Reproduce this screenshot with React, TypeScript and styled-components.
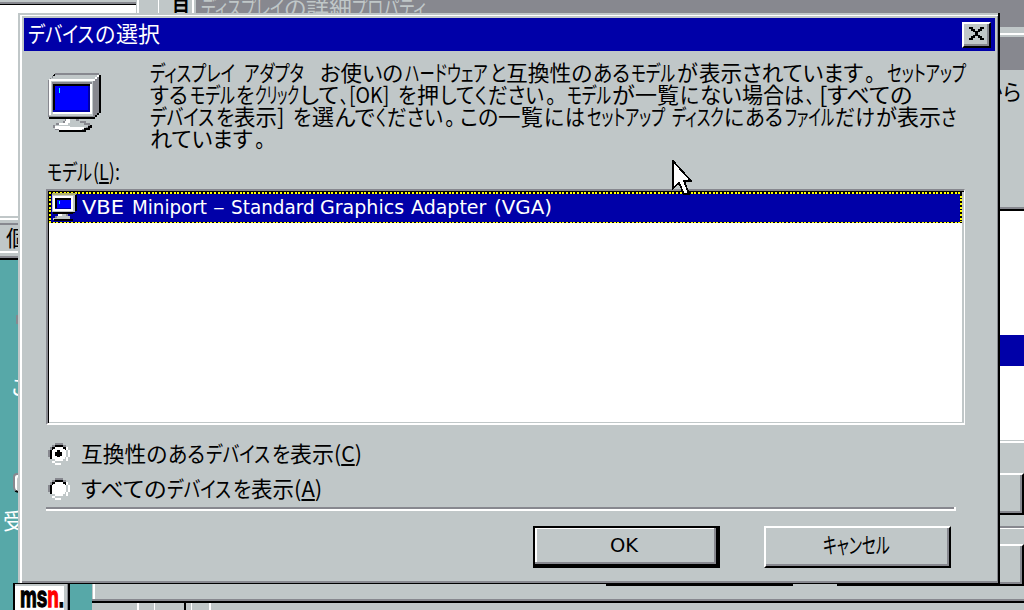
import React, { useLayoutEffect, useRef, useState } from "react";
import styled, { createGlobalStyle } from "styled-components";

const face = "#c0c7c8";
const shade = "#87888f";
const navy = "#0000a8";
const teal = "#57a8a8";

const GlobalStyle = createGlobalStyle`
  * { box-sizing: border-box; }
  body { margin: 0; overflow: hidden; }
`;

const Desktop = styled.main`
  position: relative;
  width: 1024px;
  height: 610px;
  overflow: hidden;
  background: ${teal};
  color: #000;
  font: 22px/22px "Noto Sans CJK JP", sans-serif;
  font-feature-settings: "palt";
`;

/* ---------- text fitted to the widths of the proportional bitmap face ---------- */

const Slot = styled.span<{ $gap: number; $width: number }>`
  display: block;
  flex: none;
  margin-left: ${(p) => p.$gap}px;
  width: ${(p) => p.$width}px;
  white-space: pre;
`;

const Glyphs = styled.span`
  display: inline-block;
  transform-origin: 0 50%;
  u {
    text-decoration-thickness: 2px;
    text-underline-offset: 2px;
  }
`;

function Run({ gap, width, children }: { gap: number; width: number; children: React.ReactNode }) {
  const ref = useRef<HTMLSpanElement>(null);
  const [scale, setScale] = useState(1);
  useLayoutEffect(() => {
    if (ref.current) setScale(width / ref.current.offsetWidth);
  }, [width]);
  return (
    <Slot $gap={gap} $width={width}>
      <Glyphs ref={ref} style={{ transform: `scaleX(${scale})` }}>{children}</Glyphs>
    </Slot>
  );
}

const TextRow = styled.div<{ $latin?: boolean; $color?: string }>`
  display: flex;
  height: 22px;
  color: ${(p) => p.$color ?? "inherit"};
  ${(p) => p.$latin && `font: 19.5px/22px "DejaVu Sans", sans-serif;`}
`;

type Piece = [start: number, end: number, text: React.ReactNode];

function Line({ from, pieces, latin, color }: { from: number; pieces: Piece[]; latin?: boolean; color?: string }) {
  return (
    <TextRow $latin={latin} $color={color}>
      {pieces.map(([start, end, text], i) => (
        <Run key={i} gap={start - (i ? pieces[i - 1][1] : from)} width={end - start}>{text}</Run>
      ))}
    </TextRow>
  );
}

/* ---------- windows behind the dialog ---------- */

const BackWindow = styled.section<{ $x: number; $y: number; $w: number; $h: number; $row?: boolean }>`
  position: absolute;
  left: ${(p) => p.$x}px;
  top: ${(p) => p.$y}px;
  width: ${(p) => p.$w}px;
  height: ${(p) => p.$h}px;
  display: flex;
  flex-direction: ${(p) => (p.$row ? "row" : "column")};
  overflow: hidden;
  background: ${face};
`;

const Band = styled.div<{ $size: number; $color?: string }>`
  flex: 0 0 ${(p) => p.$size}px;
  background: ${(p) => p.$color ?? face};
  overflow: hidden;
`;

const BackTitle = styled(Band)`
  > div { margin-top: -5px; }
`;

const MenuGlyph = styled(Band)`
  padding-left: 13px;
  > div { margin-top: -10px; font-weight: 700; }
`;

const StatusText = styled(Band)`
  padding-left: 6px;
`;

const Remark = styled(Band)`
  padding-top: 9px;
`;

const PartButton = styled.div<{ $h: number }>`
  flex: 0 0 ${(p) => p.$h}px;
  background: ${face};
  border-top: 2px solid #fff;
  border-right: 2px solid #000;
  border-bottom: 2px solid #000;
  box-shadow: inset -2px -2px ${shade};
`;

const DesktopLabel = styled.div<{ $x: number; $y: number }>`
  position: absolute;
  left: ${(p) => p.$x}px;
  top: ${(p) => p.$y}px;
  color: #fff;
  white-space: nowrap;
`;

const BinIcon = styled.div`
  position: absolute;
  left: 13px;
  top: 473px;
  width: 20px;
  height: 20px;
  border: 2px solid ${shade};
  border-bottom-color: #000;
  border-radius: 4px 0 0 6px;
  background: ${face};
  box-shadow: inset 2px 2px #fff;
`;

const GrayMark = styled.div`
  position: absolute;
  left: 16px;
  top: 315px;
  width: 2px;
  height: 9px;
  background: ${shade};
`;

const Msn = styled.div`
  position: absolute;
  left: 13px;
  top: 583px;
  width: 57px;
  height: 40px;
  padding: 2px 0 0 4px;
  background: #fff;
  border: 2px solid #000;
  border-top-width: 1px;
  box-shadow: inset -1px 0 ${shade}, inset -4px 0 ${face}, inset 0 2px ${face};
  font: 700 30px/30px "Liberation Sans", sans-serif;
  -webkit-text-stroke: 1.4px;
  em { font-style: normal; color: #f00; }
  > span { margin-top: -4px; }
`;

const LowerStrip = styled.div<{ $h: number }>`
  display: flex;
  height: ${(p) => p.$h}px;
`;

/* ---------- dialog ---------- */

const Dialog = styled.section`
  position: absolute;
  left: 18px;
  top: 13px;
  width: 982px;
  height: 571px;
  padding: 5px 3px 0 6px;
  background: ${face};
  border-right: 2px solid #000;
  border-bottom: 1px solid #000;
  box-shadow: inset 2px 2px ${face}, inset 4px 3px #fff, inset -1px -2px ${shade};
`;

const TitleBar = styled.header`
  display: flex;
  justify-content: space-between;
  width: 971px;
  height: 33px;
  padding: 4px 4px 0 4px;
  background: ${navy};
  color: #fff;
  > div { margin-top: -1px; }
`;

const CloseButton = styled.button`
  display: flex;
  align-items: flex-start;
  width: 29px;
  height: 26px;
  padding: 3px 0 0 5px;
  background: ${face};
  border: solid;
  border-width: 2px;
  border-color: #fff #000 #000 #fff;
  box-shadow: inset -2px -2px ${shade};
  svg { display: block; flex: none; }
`;

const Intro = styled.div`
  display: flex;
  height: 108px;
  padding: 9px 0 0 24px;
`;

const IconCell = styled.div`
  width: 102px;
  padding-top: 12px;
  svg { display: block; }
`;

const Caption = styled.div`
  padding-left: 23px;
  height: 30px;
`;

const ListBox = styled.div`
  width: 919px;
  height: 236px;
  margin-left: 22px;
  background: #fff;
  border: solid;
  border-width: 2px 1px 2px 2px;
  border-color: ${shade} #fff #fff ${shade};
  box-shadow: inset 1px 1px #000, inset -2px -1px ${face};
  padding: 1px 2px 1px 1px;
`;

const dots = (dir: string) =>
  `repeating-linear-gradient(${dir}, #ff0 0 2px, #000 2px 4px, #ff0 4px 6px, #000 6px 7px, #ff0 7px 9px, #000 9px 11px)`;

const SelectedItem = styled.div`
  display: flex;
  height: 31px;
  padding: 2px 0 0 2px;
  background:
    ${dots("90deg")} 0 0 / 100% 2px no-repeat,
    ${dots("90deg")} 0 100% / 100% 1px no-repeat,
    ${dots("180deg")} 0 0 / 2px 100% no-repeat,
    ${dots("180deg")} 100% 0 / 2px 100% no-repeat,
    ${navy};
  svg { display: block; flex: none; margin-top: -1px; }
  > div { margin-top: 3px; }
`;

const Choices = styled.div`
  display: flex;
  flex-direction: column;
  gap: 13px;
  height: 82px;
  padding: 17px 0 0 24px;
`;

const Choice = styled.label`
  display: flex;
  height: 22px;
  svg { display: block; flex: none; margin-top: 1px; }
  > div { margin-top: -1px; }
`;

const Separator = styled.hr`
  width: 910px;
  height: 4px;
  margin: 0 0 0 22px;
  border: 0;
  border-right: 2px solid #fff;
  background: linear-gradient(${shade} 2px, #fff 2px);
`;

const Actions = styled.footer`
  display: flex;
  gap: 44px;
  margin: 15px 0 0 509px;
`;

const PushButton = styled.button<{ $default?: boolean }>`
  display: flex;
  width: 187px;
  height: 42px;
  padding: 0;
  font: inherit;
  font-feature-settings: "palt";
  color: #000;
  background: ${face};
  border: 2px solid #000;
  border-right-width: ${(p) => (p.$default ? 4 : 2)}px;
  border-bottom-width: ${(p) => (p.$default ? 4 : 2)}px;
  border-top-color: ${(p) => (p.$default ? "#000" : "#fff")};
  border-left-color: ${(p) => (p.$default ? "#000" : "#fff")};
  box-shadow: inset -2px -2px ${shade}${(p) => (p.$default ? ", inset 2px 1px #fff" : "")};
  > div { margin-top: ${(p) => (p.$default ? 7 : 4)}px; }
`;

const Pointer = styled.svg`
  position: absolute;
  left: 672px;
  top: 160px;
`;

function MonitorIcon() {
  return (
    <svg width="53" height="60" viewBox="0 0 53 60" shapeRendering="crispEdges">
      <path d="M7 1H51V3H53V41H51V43H49V45H47V47H1V44H4V6Z" fill="#000" />
      <path d="M7 1H51V41H49V43H47V45H0V8H2V6H4V4H7Z" fill={shade} />
      <path d="M7 3H49V5H47V7H3V6H5V4H7Z" fill={face} />
      <path d="M1 8H45V44H1Z" fill={face} />
      <path d="M1 7H46V9H3V43H1Z" fill="#fff" />
      <path d="M47 5H49V3H51V5H49V7H47V9H45V7H47Z" fill="#fff" />
      <path d="M4 10H44V12H5V40H4Z" fill={shade} />
      <path d="M42 12H44V42H5V40H42Z" fill="#fff" />
      <path d="M5 12H42V40H5Z" fill={navy} />
      <path d="M5 12H42V14H7V38H5Z" fill="#000" />
      <path d="M7 14H40V38H7Z" fill="#00f" />
      <path d="M11 16H12V21H11Z" fill="#0ff" />
      <path d="M1 45H47V47H1Z" fill="#000" />
      <path d="M17 47H31V49H38V51H42V53H44V56H42V58H38V60H11V58H7V56H5V53H8V51H15V49H17Z" fill={shade} />
      <path d="M18 47H28V49H32V51H36V53H40V55H38V57H9V56H7V53H11V51H17V49H18Z" fill={face} />
      <path d="M18 47H22V51H20V53H11V51H17V49H18ZM7 54H22V55H36V57H34V58H11V57H7Z" fill="#fff" />
      <path d="M42 53H44V56H42V58H38V60H11V58H36V56H40V54H42Z" fill="#000" />
    </svg>
  );
}

function SmallMonitorIcon() {
  return (
    <svg width="27" height="28" viewBox="0 0 27 28" shapeRendering="crispEdges">
      <path d="M2 2H26V18H24V20H2Z" fill="#000" />
      <path d="M1 1H24V19H1Z" fill={face} />
      <path d="M2 3H22V18H2Z" fill="#fff" />
      <path d="M4 5H20V16H4Z" fill="#000" />
      <path d="M6 7H20V16H6Z" fill="#00f" />
      <path d="M4 15H20V16H4Z" fill={navy} />
      <path d="M8 8H9V11H8Z" fill="#0ff" />
      <path d="M1 0H25V2H1Z" fill="#b0b070" />
      <path d="M2 19H22V21H2Z" fill="#000" />
      <path d="M7 21H15V23H19V27H2V25H4V23H7Z" fill={face} />
      <path d="M7 21H11V23H7Z" fill="#fff" />
      <path d="M15 21H17V23H15ZM4 23H6V25H4Z" fill={shade} />
      <path d="M3 26H22V28H3Z" fill="#000" />
    </svg>
  );
}

function RadioMark({ checked }: { checked?: boolean }) {
  return (
    <svg width="22" height="22" viewBox="0 0 22 22" shapeRendering="crispEdges">
      <path d="M7 0H15V2H18V4H4V2H7ZM2 4H4V7H2V14H4V16H2V14H0V7H2Z" fill={shade} />
      <path d="M18 4H20V7H22V14H20V18H15V20H13V22H7V20H4V18H18Z" fill="#fff" />
      <path d="M7 2H15V4H18V7H4V16H2V7H4V4H7Z" fill="#000" />
      <path d="M18 7H20V14H18V18H15V20H7V18H4V16H18Z" fill={face} />
      <path d="M7 4H15V6H17V7H18V14H17V16H15V18H7V16H4V7H5V6H7Z" fill="#fff" />
      {checked && <path d="M9 7H12V9H14V13H12V14H9V13H7V9H9Z" fill="#000" />}
    </svg>
  );
}

export default function App() {
  return (
    <Desktop>
      <GlobalStyle />

      <BackWindow $x={0} $y={0} $w={137} $h={260}>
        <Band $size={2} />
        <Band $size={2} $color={shade} />
        <Band $size={1} $color="#000" />
        <Band $size={211} $color="#fff" />
        <Band $size={2} />
        <Band $size={2} $color="#fff" />
        <Band $size={3} />
        <Band $size={2} $color={shade} />
        <StatusText $size={26}><Line from={0} pieces={[[0, 22, "個"]]} /></StatusText>
        <Band $size={2} $color="#fff" />
        <Band $size={3} />
        <Band $size={2} $color={shade} />
        <Band $size={2} $color="#000" />
      </BackWindow>

      <BackWindow $x={136} $y={0} $w={888} $h={14} $row>
        <Band $size={1} />
        <Band $size={2} $color="#fff" />
        <Band $size={19} />
        <Band $size={1} $color="#fff" />
        <MenuGlyph $size={33}><Line from={0} pieces={[[0, 18, "目"]]} /></MenuGlyph>
        <Band $size={2} $color="#fff" />
        <Band $size={2} />
        <BackTitle $size={830} $color={shade}>
          <Line
            color={face}
            from={196}
            pieces={[[201, 284, "ディスプレイ"], [284, 306, "の"], [306, 352, "詳細"], [352, 426, "プロパティ"]]}
          />
        </BackTitle>
      </BackWindow>

      <BackWindow $x={999} $y={0} $w={25} $h={600}>
        <Band $size={27} $color={shade} />
        <Band $size={6} />
        <Band $size={2} $color="#fff" />
        <Band $size={2} />
        <Band $size={33} $color={shade} />
        <Remark $size={137}><Line from={999} pieces={[[983, 1002, "か"], [1003, 1021, "ら"]]} /></Remark>
        <Band $size={2} $color={shade} />
        <Band $size={2} $color="#000" />
        <Band $size={124} $color="#fff" />
        <Band $size={31} $color={navy} />
        <Band $size={74} $color="#fff" />
        <Band $size={1} />
        <Band $size={2} $color="#fff" />
        <Band $size={30} />
        <PartButton $h={42} />
        <Band $size={11} />
        <Band $size={2} $color={shade} />
        <Band $size={1} $color="#fff" />
        <Band $size={15} />
        <PartButton $h={42} />
        <Band $size={14} />
      </BackWindow>

      <GrayMark />
      <DesktopLabel $x={11} $y={374}>こ</DesktopLabel>
      <BinIcon />
      <DesktopLabel $x={3} $y={508}>受信</DesktopLabel>
      <Msn><Run gap={1} width={44}>ms<em>n</em>.</Run></Msn>

      <BackWindow $x={92} $y={584} $w={932} $h={26}>
        <LowerStrip $h={2}>
          <Band $size={1} />
          <Band $size={2} $color="#fff" />
          <Band $size={511} />
          <Band $size={187} $color="#000" />
          <Band $size={44} />
          <Band $size={187} $color="#000" />
        </LowerStrip>
        <LowerStrip $h={13}>
          <Band $size={1} />
          <Band $size={2} $color="#fff" />
        </LowerStrip>
        <Band $size={2} $color={shade} />
        <Band $size={2} $color="#000" />
        <LowerStrip $h={7}>
          <Band $size={45} />
          <Band $size={2} $color="#fff" />
          <Band $size={15} />
          <Band $size={1} $color="#fff" />
          <Band $size={29} />
          <Band $size={2} $color="#000" />
          <Band $size={5} />
          <Band $size={1} $color="#fff" />
          <Band $size={17} />
          <Band $size={2} $color="#fff" />
        </LowerStrip>
      </BackWindow>

      <Dialog>
        <TitleBar>
          <Line from={28} pieces={[[28, 94, "デバイス"], [95, 115, "の"], [116, 160, "選択"]]} />
          <CloseButton aria-label="閉じる">
            <svg width="15" height="13" viewBox="0 0 15 13" shapeRendering="crispEdges">
              <path d="M0 0H4V2H6V4H9V2H11V0H15V2H13V4H11V5H9V8H11V9H13V11H15V13H11V11H9V9H6V11H4V13H0V11H2V9H4V8H6V5H4V4H2V2H0Z" />
            </svg>
          </CloseButton>
        </TitleBar>

        <Intro>
          <IconCell><MonitorIcon /></IconCell>
          <div>
            <Line from={150} pieces={[
              [150, 235, "ディスプレイ"], [244, 304, "アダプタ"], [320, 403, "お使いの"], [405, 488, "ハードウェア"],
              [490, 506, "と"], [506, 592, "互換性の"], [593, 630, "ある"], [631, 675, "モデル"], [677, 698, "が"],
              [699, 742, "表示"], [742, 863, "されています"], [865, 875, "。"], [887, 966, "セットアップ"],
            ]} />
            <Line from={150} pieces={[
              [150, 188, "する"], [190, 235, "モデル"], [236, 254, "を"], [255, 299, "クリック"], [300, 339, "して"],
              [340, 348, "、"], [349, 389, "[OK]"], [398, 416, "を"], [417, 439, "押"], [440, 474, "して"], [475, 487, "く"],
              [488, 544, "ださい"], [546, 556, "。"], [567, 611, "モデル"], [612, 635, "が"], [635, 679, "一覧"],
              [680, 699, "に"], [700, 741, "ない"], [742, 784, "場合"], [784, 804, "は"], [806, 814, "、"],
              [819, 827, "["], [827, 912, "すべての"],
            ]} />
            <Line from={150} pieces={[
              [150, 214, "デバイス"], [216, 234, "を"], [234, 277, "表示"], [277, 284, "]"], [293, 311, "を"], [312, 334, "選"],
              [335, 375, "んで"], [376, 386, "く"], [387, 443, "ださい"], [445, 455, "。"], [460, 498, "この"], [498, 543, "一覧"],
              [544, 564, "に"], [565, 585, "は"], [587, 665, "セットアップ"], [672, 724, "ディスク"], [724, 744, "に"],
              [745, 783, "ある"], [785, 834, "ファイル"], [835, 875, "だけ"], [876, 897, "が"], [897, 941, "表示"], [941, 957, "さ"],
            ]} />
            <Line from={150} pieces={[[150, 253, "れています"], [255, 265, "。"]]} />
          </div>
        </Intro>

        <Caption>
          <Line from={47} pieces={[[47, 92, "モデル"], [93, 120, <>(<u>L</u>):</>]]} />
        </Caption>

        <ListBox>
          <SelectedItem>
            <SmallMonitorIcon />
            <Line latin color="#fff" from={78} pieces={[
              [82, 124, "VBE"], [132, 207, "Miniport"], [213, 225, "–"], [231, 315, "Standard"],
              [320, 404, "Graphics"], [411, 486, "Adapter"], [494, 552, "(VGA)"],
            ]} />
          </SelectedItem>
        </ListBox>

        <Choices>
          <Choice>
            <RadioMark checked />
            <Line from={70} pieces={[
              [81, 167, "互換性の"], [168, 205, "ある"], [206, 270, "デバイス"], [272, 290, "を"], [290, 334, "表示"], [334, 362, <>(<u>C</u>)</>],
            ]} />
          </Choice>
          <Choice>
            <RadioMark />
            <Line from={70} pieces={[
              [81, 166, "すべての"], [167, 231, "デバイス"], [233, 251, "を"], [251, 294, "表示"], [294, 322, <>(<u>A</u>)</>],
            ]} />
          </Choice>
        </Choices>

        <Separator />

        <Actions>
          <PushButton $default><Line latin from={535} pieces={[[610, 638, "OK"]]} /></PushButton>
          <PushButton><Line from={766} pieces={[[823, 890, "キャンセル"]]} /></PushButton>
        </Actions>
      </Dialog>

      <Pointer width="20" height="35" viewBox="0 0 20 35" shapeRendering="crispEdges">
        <path d="M1 1V28L7 23L12 34H17L12 21H19Z" fill="#fff" stroke="#000" strokeWidth="1.8" />
      </Pointer>
    </Desktop>
  );
}
